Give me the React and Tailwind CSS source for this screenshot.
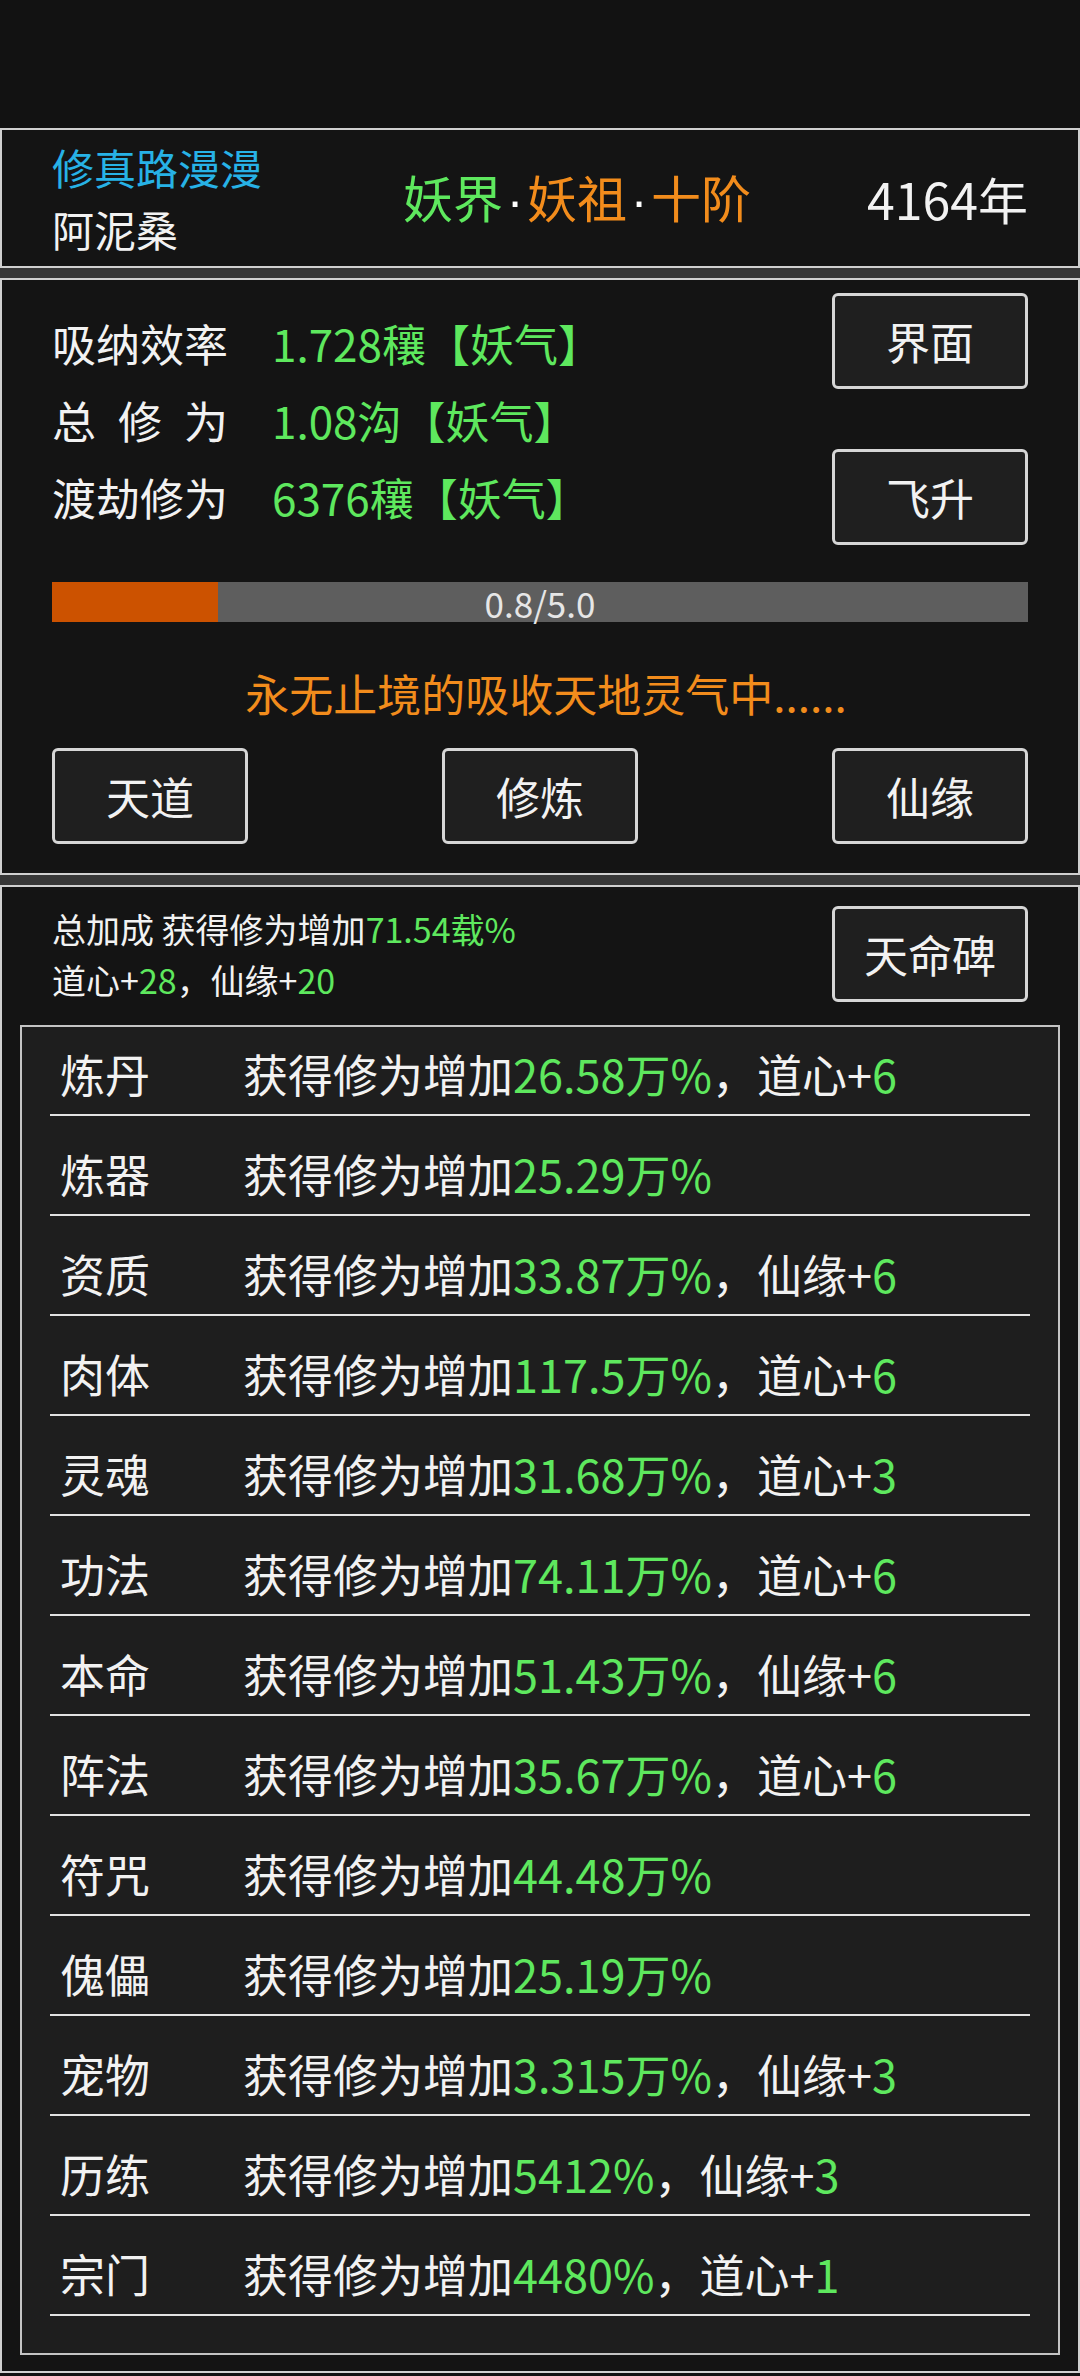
import React from "react";

const font = "font-['Noto_Sans_CJK_SC','Noto_Sans',sans-serif]";

const rows = [
  { name: "炼丹", pct: "26.58万%", extra: "道心+", n: "6" },
  { name: "炼器", pct: "25.29万%" },
  { name: "资质", pct: "33.87万%", extra: "仙缘+", n: "6" },
  { name: "肉体", pct: "117.5万%", extra: "道心+", n: "6" },
  { name: "灵魂", pct: "31.68万%", extra: "道心+", n: "3" },
  { name: "功法", pct: "74.11万%", extra: "道心+", n: "6" },
  { name: "本命", pct: "51.43万%", extra: "仙缘+", n: "6" },
  { name: "阵法", pct: "35.67万%", extra: "道心+", n: "6" },
  { name: "符咒", pct: "44.48万%" },
  { name: "傀儡", pct: "25.19万%" },
  { name: "宠物", pct: "3.315万%", extra: "仙缘+", n: "3" },
  { name: "历练", pct: "5412%", extra: "仙缘+", n: "3" },
  { name: "宗门", pct: "4480%", extra: "道心+", n: "1" },
];

const Button = ({ children }) => (
  <button className="w-[196px] h-[96px] shrink-0 flex items-center justify-center bg-[#1f1f1f] border-[3px] border-[#d6d6d6] rounded-[6px] text-[44px] text-[#f2f2f2] leading-none">
    {children}
  </button>
);

const Stat = ({ label, value }) => (
  <div className="flex items-center leading-[77px] text-[44px]">
    <div className="w-[220px] text-[#f2f2f2]">{label}</div>
    <div className="text-[#5ee85e]">{value}</div>
  </div>
);

const Dot = () => (
  <span className="inline-block w-[24px] text-center text-white font-['Liberation_Sans',sans-serif]">
    ·
  </span>
);

export default function App() {
  return (
    <div className={`${font} w-[1080px] min-h-[2376px] bg-[#121212] text-[#f2f2f2]`}>
      <div className="h-[128px] bg-[#121212]" />
      <div className="flex flex-col gap-[10px] bg-[#373737]">
        {/* header */}
        <section className="h-[140px] border-2 border-[#d0d0d0] bg-[#141414] flex items-center px-[50px]">
          <div className="w-[351px] flex flex-col text-[42px] leading-[62px]">
            <span className="text-[#27b2e6]">修真路漫漫</span>
            <span className="text-[#f2f2f2]">阿泥桑</span>
          </div>
          <div className="text-[50px] leading-none whitespace-nowrap">
            <span className="text-[#5ee85e]">妖界</span>
            <Dot />
            <span className="text-[#f28c1c]">妖祖</span>
            <Dot />
            <span className="text-[#f28c1c]">十阶</span>
          </div>
          <div className="ml-auto text-[50px] leading-none text-[#f2f2f2]">4164年</div>
        </section>

        {/* cultivation */}
        <section className="border-2 border-[#d0d0d0] bg-[#141414] px-[50px] pt-[13px] pb-[29px]">
          <div className="flex justify-between">
            <div className="mt-[12px]">
              <Stat label="吸纳效率" value="1.728穰【妖气】" />
              <Stat
                label={
                  <span className="w-[176px] flex justify-between">
                    <span>总</span>
                    <span>修</span>
                    <span>为</span>
                  </span>
                }
                value="1.08沟【妖气】"
              />
              <Stat label="渡劫修为" value="6376穰【妖气】" />
            </div>
            <div className="flex flex-col gap-[60px]">
              <Button>界面</Button>
              <Button>飞升</Button>
            </div>
          </div>
          <div className="mt-[37px] h-[40px] bg-[#5e5e5e] relative flex items-center justify-center">
            <div className="absolute left-0 top-0 h-full w-[17%] bg-[#cc5200]" />
            <span className="relative text-[35px] text-[#e6e6e6] leading-none">0.8/5.0</span>
          </div>
          <div className="mt-[41px] pl-[12px] text-center text-[44px] leading-[60px] text-[#f28c1c]">
            永无止境的吸收天地灵气中......
          </div>
          <div className="mt-[25px] flex justify-between">
            <Button>天道</Button>
            <Button>修炼</Button>
            <Button>仙缘</Button>
          </div>
        </section>

        {/* bonuses */}
        <section className="border-2 border-[#d0d0d0] bg-[#141414] pt-[19px] pb-[16px]">
          <div className="h-[96px] flex items-center justify-between px-[50px]">
            <div className="text-[34px] leading-[51px]">
              <div>
                总加成 获得修为增加<span className="text-[#5ee85e]">71.54载%</span>
              </div>
              <div>
                道心+<span className="text-[#5ee85e]">28</span>，仙缘+
                <span className="text-[#5ee85e]">20</span>
              </div>
            </div>
            <Button>天命碑</Button>
          </div>
          <div className="mt-[23px] mx-[18px] border-2 border-[#c4c4c4] bg-[#1e1e1e] px-[28px] pb-[37px]">
            {rows.map((r, i) => (
              <div
                key={r.name}
                className={`${i === 0 ? "pt-[19px]" : "pt-[30px]"} pb-[12px] border-b-2 border-[#e2e2e2] flex text-[45px] leading-[56px]`}
              >
                <div className="w-[193px] pl-[10px] shrink-0">{r.name}</div>
                <div>
                  获得修为增加<span className="text-[#5ee85e]">{r.pct}</span>
                  {r.extra && (
                    <>
                      ，{r.extra}
                      <span className="text-[#5ee85e]">{r.n}</span>
                    </>
                  )}
                </div>
              </div>
            ))}
          </div>
        </section>
      </div>
    </div>
  );
}
